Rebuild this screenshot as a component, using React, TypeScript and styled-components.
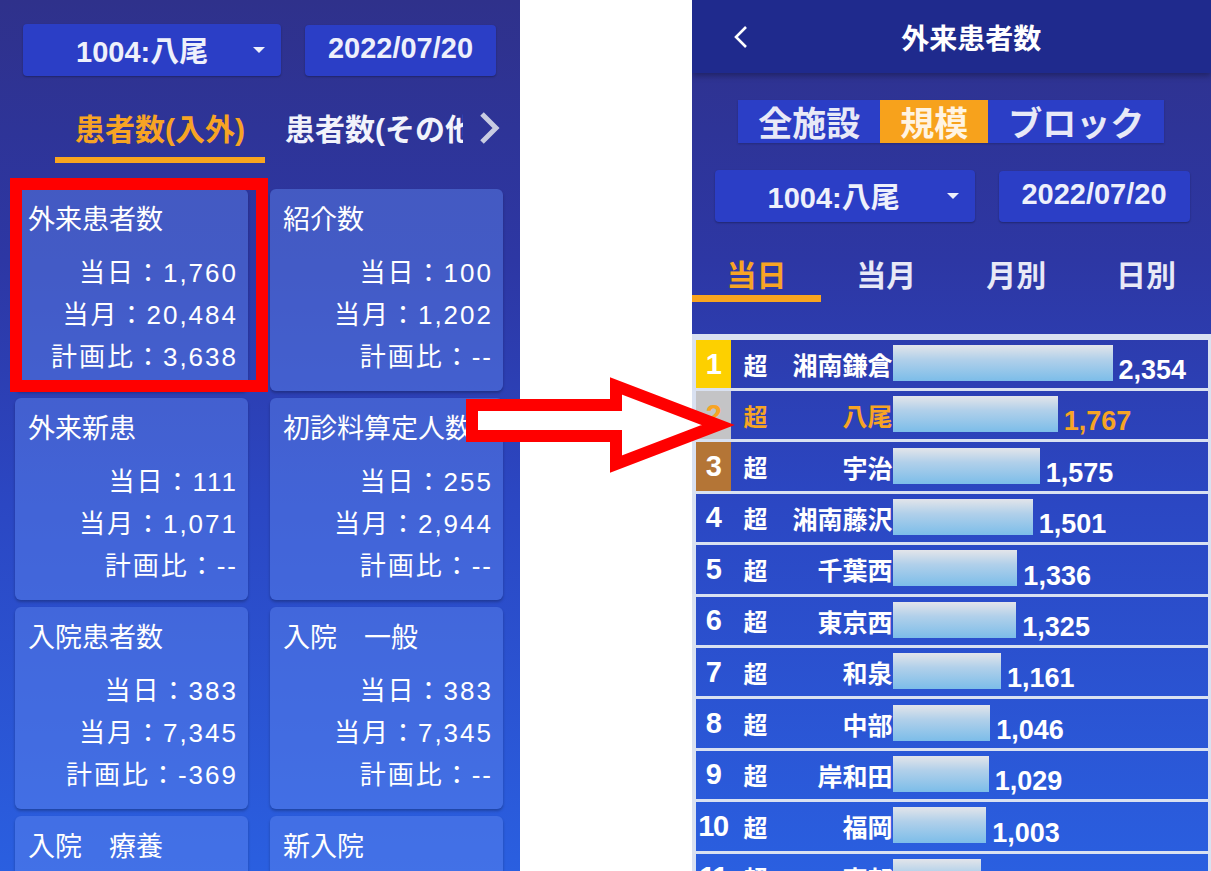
import React from 'react'
import styled, { createGlobalStyle } from 'styled-components'

const GlobalStyle = createGlobalStyle`
  html, body {
    margin: 0;
    padding: 0;
    background: #ffffff;
  }
  body {
    font-family: 'Liberation Sans', 'Noto Sans CJK JP', sans-serif;
    -webkit-font-smoothing: antialiased;
  }
  * {
    box-sizing: border-box;
  }
`

type Metric = { title: string; today: string; month: string; plan: string }

const metrics: Metric[] = [
  { title: '外来患者数', today: '1,760', month: '20,484', plan: '3,638' },
  { title: '紹介数', today: '100', month: '1,202', plan: '--' },
  { title: '外来新患', today: '111', month: '1,071', plan: '--' },
  { title: '初診料算定人数', today: '255', month: '2,944', plan: '--' },
  { title: '入院患者数', today: '383', month: '7,345', plan: '-369' },
  { title: '入院　一般', today: '383', month: '7,345', plan: '--' },
  { title: '入院　療養', today: '--', month: '--', plan: '--' },
  { title: '新入院', today: '--', month: '--', plan: '--' },
]

type Facility = { name: string; value: number; self?: boolean }

const ranking: Facility[] = [
  { name: '湘南鎌倉', value: 2354 },
  { name: '八尾', value: 1767, self: true },
  { name: '宇治', value: 1575 },
  { name: '湘南藤沢', value: 1501 },
  { name: '千葉西', value: 1336 },
  { name: '東京西', value: 1325 },
  { name: '和泉', value: 1161 },
  { name: '中部', value: 1046 },
  { name: '岸和田', value: 1029 },
  { name: '福岡', value: 1003 },
  { name: '東部', value: 943 },
]

const medalColors: Record<number, string> = {
  1: '#fdd000',
  2: '#c4c4c6',
  3: '#b47536',
}

const ORANGE = '#f7a424'
const BAR_MAX = 220

export default function App() {
  const max = Math.max(...ranking.map((r) => r.value))

  return (
    <Page>
      <GlobalStyle />
      <Phone>
        <SelectorRow>
          <SelectBox>
            <span>1004:八尾</span>
            <Caret />
          </SelectBox>
          <DateBox>2022/07/20</DateBox>
        </SelectorRow>

        <CategoryBar>
          <CategoryViewport>
            <CategoryTab $active>
              <CategoryLabel>患者数(入外)</CategoryLabel>
              <CategoryLine $active />
            </CategoryTab>
            <CategoryTab>
              <CategoryLabel>患者数(その他)</CategoryLabel>
              <CategoryLine />
            </CategoryTab>
          </CategoryViewport>
          <ScrollNext viewBox="0 0 22 34">
            <polyline points="4,3 18,17 4,31" />
          </ScrollNext>
        </CategoryBar>

        <CardGrid>
          {metrics.map((m) => (
            <Card key={m.title}>
              <CardTitle>{m.title}</CardTitle>
              <CardValues>
                <ValueLine>当日：{m.today}</ValueLine>
                <ValueLine>当月：{m.month}</ValueLine>
                <ValueLine>計画比：{m.plan}</ValueLine>
              </CardValues>
            </Card>
          ))}
        </CardGrid>
      </Phone>

      <Phone>
        <Header>
          <BackIcon viewBox="0 0 16 24">
            <polyline points="13,2 3,12 13,22" />
          </BackIcon>
          <HeaderTitle>外来患者数</HeaderTitle>
        </Header>

        <SegmentWrap>
          <Segmented>
            <Segment>全施設</Segment>
            <Segment $active>規模</Segment>
            <Segment>ブロック</Segment>
          </Segmented>
        </SegmentWrap>

        <SelectorRow $right>
          <SelectBox $wide>
            <span>1004:八尾</span>
            <Caret />
          </SelectBox>
          <DateBox>2022/07/20</DateBox>
        </SelectorRow>

        <PeriodTabs>
          {['当日', '当月', '月別', '日別'].map((t, i) => (
            <PeriodTab key={t}>
              <PeriodLabel $active={i === 0}>{t}</PeriodLabel>
              <PeriodLine $active={i === 0} />
            </PeriodTab>
          ))}
        </PeriodTabs>

        <RankList>
          {ranking.map((r, i) => {
            const rank = i + 1
            return (
              <RankRow key={r.name} $self={r.self}>
                <RankNo $medal={medalColors[rank]}>{rank}</RankNo>
                <Scale>超</Scale>
                <FacilityName>{r.name}</FacilityName>
                <Bar style={{ width: (r.value / max) * BAR_MAX }} />
                <RankValue>{r.value.toLocaleString('en-US')}</RankValue>
              </RankRow>
            )
          })}
        </RankList>
      </Phone>

      <Highlight />
      <Pointer viewBox="0 0 1211 871">
        <polygon points="472,405 616,405 616,386 718,425 616,464 616,436 472,436" />
      </Pointer>
    </Page>
  )
}

const Page = styled.div`
  position: relative;
  display: flex;
  gap: 172px;
  width: 1211px;
  height: 871px;
  overflow: hidden;
  background: #ffffff;
`

const Phone = styled.div`
  display: flex;
  flex-direction: column;
  flex: 1 0 0;
  height: 871px;
  overflow: hidden;
  background: linear-gradient(180deg, #2f318b 0%, #2d37a4 30%, #2b47c3 58%, #2a5fe0 100%);
  color: #ffffff;
`

const SelectorRow = styled.div<{ $right?: boolean }>`
  display: flex;
  align-items: center;
  gap: 24px;
  padding: ${({ $right }) => ($right ? '27px 0 0 23px' : '24px 0 0 23px')};
`

const SelectBox = styled.div<{ $wide?: boolean }>`
  display: flex;
  align-items: center;
  justify-content: space-between;
  width: ${({ $wide }) => ($wide ? '260px' : '258px')};
  height: 52px;
  padding: 0 16px 3px 53px;
  border-radius: 4px;
  background: #2b3ec6;
  box-shadow: 0 1px 2px rgba(0, 0, 0, 0.3);
  font-size: 29px;
  font-weight: 700;
  color: #eef0fb;
`

const Caret = styled.span`
  width: 0;
  height: 0;
  margin-top: 3px;
  border-left: 6px solid transparent;
  border-right: 6px solid transparent;
  border-top: 6px solid #eef0fb;
`

const DateBox = styled.div`
  display: flex;
  align-items: center;
  justify-content: center;
  width: 191px;
  height: 51px;
  padding-bottom: 3px;
  border-radius: 4px;
  background: #2b3ec6;
  box-shadow: 0 1px 2px rgba(0, 0, 0, 0.3);
  font-size: 29px;
  font-weight: 700;
  color: #eef0fb;
`

const CategoryBar = styled.div`
  display: flex;
  align-items: center;
  margin-top: 24px;
`

const CategoryViewport = styled.div`
  display: flex;
  width: 408px;
  margin-left: 55px;
  overflow: hidden;
`

const CategoryTab = styled.div<{ $active?: boolean }>`
  display: flex;
  flex-direction: column;
  flex: none;
  padding-top: 10px;
  color: ${({ $active }) => ($active ? ORANGE : '#f2f3fb')};
`

const CategoryLabel = styled.div`
  height: 40px;
  padding: 0 20px;
  line-height: 40px;
  font-size: 30px;
  font-weight: 700;
  white-space: nowrap;
`

const CategoryLine = styled.div<{ $active?: boolean }>`
  width: 100%;
  height: 6px;
  margin-top: 7px;
  background: ${({ $active }) => ($active ? '#f9a51f' : 'transparent')};
`

const ScrollNext = styled.svg`
  width: 22px;
  height: 34px;
  margin-left: 15px;
  margin-bottom: 8px;
  fill: none;
  stroke: #c9cce2;
  stroke-width: 5;
`

const CardGrid = styled.div`
  display: grid;
  grid-template-columns: 233px 233px;
  column-gap: 22px;
  row-gap: 7px;
  padding: 26px 0 0 15px;
`

const Card = styled.div`
  height: 202px;
  padding: 14px 10px 0 13px;
  border-radius: 6px;
  background: rgba(95, 135, 240, 0.45);
  box-shadow: 0 2px 3px rgba(0, 0, 0, 0.25);
`

const CardTitle = styled.div`
  height: 34px;
  line-height: 34px;
  font-size: 27px;
  white-space: nowrap;
`

const CardValues = styled.div`
  margin-top: 15px;
  text-align: right;
`

const ValueLine = styled.div`
  height: 42px;
  line-height: 42px;
  font-size: 26px;
  letter-spacing: 2px;
  white-space: nowrap;
`

const Header = styled.div`
  display: flex;
  align-items: center;
  flex: 0 0 73px;
  padding: 0 17px 0 41px;
  background: #1f2a8d;
  box-shadow: 0 3px 6px rgba(0, 0, 0, 0.3);
`

const BackIcon = styled.svg`
  width: 16px;
  height: 24px;
  fill: none;
  stroke: #ffffff;
  stroke-width: 2.6;
`

const HeaderTitle = styled.div`
  flex: 1;
  text-align: center;
  font-size: 28px;
  font-weight: 700;
`

const SegmentWrap = styled.div`
  display: flex;
  justify-content: center;
  margin-top: 27px;
`

const Segmented = styled.div`
  display: flex;
  height: 43px;
  background: #2b3ec6;
  box-shadow: 0 1px 2px rgba(0, 0, 0, 0.2);
`

const Segment = styled.div<{ $active?: boolean }>`
  display: flex;
  align-items: center;
  padding: 0 20px;
  font-size: 34px;
  font-weight: 700;
  color: ${({ $active }) => ($active ? '#fff4e2' : '#e8e9f7')};
  background: ${({ $active }) => ($active ? '#f7a21c' : 'transparent')};
`

const PeriodTabs = styled.div`
  display: grid;
  grid-template-columns: repeat(4, 1fr);
  margin-top: 16px;
`

const PeriodTab = styled.div`
  display: flex;
  flex-direction: column;
  align-items: center;
  padding-top: 14px;
`

const PeriodLabel = styled.div<{ $active?: boolean }>`
  height: 40px;
  padding-top: 4px;
  line-height: 40px;
  font-size: 30px;
  font-weight: 700;
  color: ${({ $active }) => ($active ? ORANGE : '#e8e9f7')};
`

const PeriodLine = styled.div<{ $active?: boolean }>`
  width: 100%;
  height: 7px;
  margin-top: 3px;
  background: ${({ $active }) => ($active ? '#f9a51f' : 'transparent')};
`

const RankList = styled.div`
  display: flex;
  flex-direction: column;
  margin-top: 32px;
  border-left: 4px solid #d9e1f1;
  border-right: 3px solid #d9e1f1;
`

const RankRow = styled.div<{ $self?: boolean }>`
  display: flex;
  align-items: center;
  flex: 0 0 auto;
  height: 51.4px;
  border-top: 3.4px solid #d9e1f1;
  color: ${({ $self }) => ($self ? ORANGE : '#ffffff')};

  &:first-child {
    height: 54px;
    border-top-width: 6px;
  }
`

const RankNo = styled.div<{ $medal?: string }>`
  display: flex;
  align-items: center;
  justify-content: center;
  align-self: stretch;
  width: 35px;
  background: ${({ $medal }) => $medal ?? 'transparent'};
  font-size: 29px;
  font-weight: 700;
  letter-spacing: -1.5px;
`

const Scale = styled.div`
  margin-left: 13px;
  font-size: 24px;
  font-weight: 700;
`

const FacilityName = styled.div`
  width: 125px;
  text-align: right;
  font-size: 25px;
  font-weight: 700;
  white-space: nowrap;
`

const Bar = styled.div`
  height: 36px;
  margin-top: -2px;
  background: linear-gradient(180deg, #e3e5ea 0%, #b1d0ea 40%, #7cbde9 100%);
`

const RankValue = styled.div`
  align-self: flex-end;
  margin-left: 6px;
  padding-bottom: 4px;
  line-height: 1;
  font-size: 27px;
  font-weight: 700;
`

const Highlight = styled.div`
  position: absolute;
  left: 10px;
  top: 178px;
  width: 258px;
  height: 214px;
  border: 12px solid #ff0000;
  pointer-events: none;
`

const Pointer = styled.svg`
  position: absolute;
  left: 0;
  top: 0;
  width: 1211px;
  height: 871px;
  pointer-events: none;
  fill: #ffffff;
  stroke: #ff0000;
  stroke-width: 12;
  stroke-linejoin: miter;
`
